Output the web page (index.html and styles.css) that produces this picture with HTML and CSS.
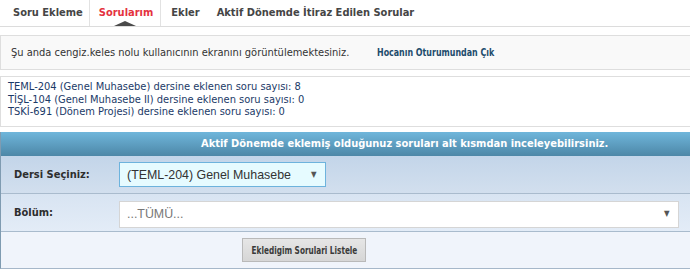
FILE: index.html
```html
<!DOCTYPE html>
<html lang="tr">
<head>
  <meta charset="UTF-8" />
  <title>Sorularım</title>
  <link rel="stylesheet" href="styles.css">
</head>
<body>

  <ul class="tabs">
    <li>Soru Ekleme</li>
    <li class="active">Sorularım</li>
    <li>Ekler</li>
    <li>Aktif Dönemde İtiraz Edilen Sorular</li>
  </ul>

  <div class="notice">
    Şu anda cengiz.keles nolu kullanıcının ekranını görüntülemektesiniz.
    <a href="#"><span class="narrow">Hocanın Oturumundan Çık</span></a>
  </div>

  <div class="counts">
    TEML-204 (Genel Muhasebe) dersine eklenen soru sayısı: 8<br>
    TİŞL-104 (Genel Muhasebe II) dersine eklenen soru sayısı: 0<br>
    TSKİ-691 (Dönem Projesi) dersine eklenen soru sayısı: 0
  </div>

  <div class="panel">
    <div class="panel-head">Aktif Dönemde eklemiş olduğunuz soruları alt kısmdan inceleyebilirsiniz.</div>

    <div class="row row-ders">
      <label for="ders">Dersi Seçiniz:</label>
      <span class="pick pick-ders">
        <select id="ders">
          <option>(TEML-204) Genel Muhasebe</option>
          <option>(TİŞL-104) Genel Muhasebe II</option>
          <option>(TSKİ-691) Dönem Projesi</option>
        </select>
      </span>
    </div>

    <div class="row row-bolum">
      <label for="bolum">Bölüm:</label>
      <span class="pick pick-bolum">
        <select id="bolum">
          <option>...TÜMÜ...</option>
        </select>
      </span>
    </div>

    <div class="row row-btn">
      <button type="button"><span class="narrow">Ekledigim Sorulari Listele</span></button>
    </div>
  </div>

</body>
</html>
```

FILE: styles.css
```css
body {
  margin: 0;
  font-family: "DejaVu Sans Condensed", "DejaVu Sans", sans-serif;
  font-size: 11px;
  color: #333;
  background: #fff;
  overflow: hidden;
}

.narrow {
  display: inline-block;
  transform: scaleX(0.8);
}

.tabs {
  display: flex;
  margin: 0;
  padding: 0;
  list-style: none;
  height: 26px;
  border-bottom: 1px solid #dcdcdc;
}
.tabs li {
  position: relative;
  padding: 0 6px 0 13px;
  line-height: 26px;
  font-weight: bold;
  font-size: 11px;
  color: #454545;
}
.tabs li:nth-child(1) { border-right: 1px solid #e2e2e2; }
.tabs li:nth-child(2) { border-right: 1px solid #e2e2e2; padding: 0 7px 0 9px; }
.tabs li:nth-child(3) { padding: 0 4px 0 10px; }
.tabs li.active { color: #e4323e; }
.tabs li.active::after {
  content: "";
  position: absolute;
  left: 50%;
  bottom: 0;
  margin-left: -11px;
  border-left: 11px solid transparent;
  border-right: 11px solid transparent;
  border-bottom: 5px solid #4a4a4a;
}

.notice {
  margin-top: 8px;
  height: 33px;
  line-height: 33px;
  padding-left: 10px;
  background: #f9f9f9;
  border: 1px solid #dedede;
  border-right: none;
}
.notice a {
  margin-left: 24px;
  color: #1e4c6c;
  font-weight: bold;
  text-decoration: none;
}
.notice .narrow {
  transform-origin: left center;
}

.counts {
  margin-top: 6px;
  padding: 4px 7px 8px;
  height: 37px;
  line-height: 12.5px;
  color: #1b3a68;
  border: 1px solid #dedede;
  border-right: none;
}

.panel {
  margin-top: 5px;
  border-left: 1px solid #7f9bb1;
  border-bottom: 1px solid #a6b7c9;
}
.panel-head {
  height: 24px;
  line-height: 24px;
  padding-left: 200px;
  color: #fff;
  font-weight: bold;
  font-size: 11px;
  background: linear-gradient(#6fb6db, #4d87a7);
}

.row {
  display: grid;
  grid-template-columns: 105px auto;
  align-items: center;
  padding-left: 13px;
  border-bottom: 1px solid #a9bbcd;
}
.row label {
  font-weight: bold;
  color: #2d2d2d;
}
.row-ders {
  height: 37px;
  background: linear-gradient(#c3d5e9, #d2dfee);
}
.row-bolum {
  height: 37px;
  background: linear-gradient(#d8e4f2, #e3ecf7);
}
.row-btn {
  display: flex;
  height: 36px;
  padding-left: 241px;
  background: #f0f4fb;
  border-bottom: none;
}

.pick {
  position: relative;
  display: block;
}
.pick select {
  appearance: none;
  -webkit-appearance: none;
  display: block;
  margin: 0;
  font-family: "Liberation Sans", Arial, sans-serif;
  font-size: 12.4px;
  padding: 0 0 0 7px;
  border-radius: 0;
  outline: none;
}
.pick::after {
  content: "▼";
  position: absolute;
  top: 50%;
  margin-top: -6px;
  font-size: 8px;
  line-height: 12px;
  color: #555;
  pointer-events: none;
}
.pick-ders select {
  width: 207px;
  height: 25px;
  color: #333;
  background: #e6fbff;
  border: 1px solid #6db3dd;
}
.pick-ders::after { left: 192px; }
.pick-bolum select {
  width: 560px;
  height: 27px;
  margin-top: 3px;
  color: #777;
  background: #fff;
  border: 1px solid #d5d5d5;
}
.pick-bolum::after { left: 545px; margin-top: -5px; }

.row-btn button {
  width: 124px;
  height: 24px;
  padding: 0;
  font-family: "DejaVu Sans Condensed", "DejaVu Sans", sans-serif;
  font-size: 11px;
  font-weight: bold;
  color: #3a3a3a;
  background: linear-gradient(#e6e6e6, #d6d6d6);
  border: 1px solid #b9b9b9;
  border-radius: 0;
}
.row-btn .narrow {
  margin: 0 -20px;
  transform: scaleX(0.74);
}
```
